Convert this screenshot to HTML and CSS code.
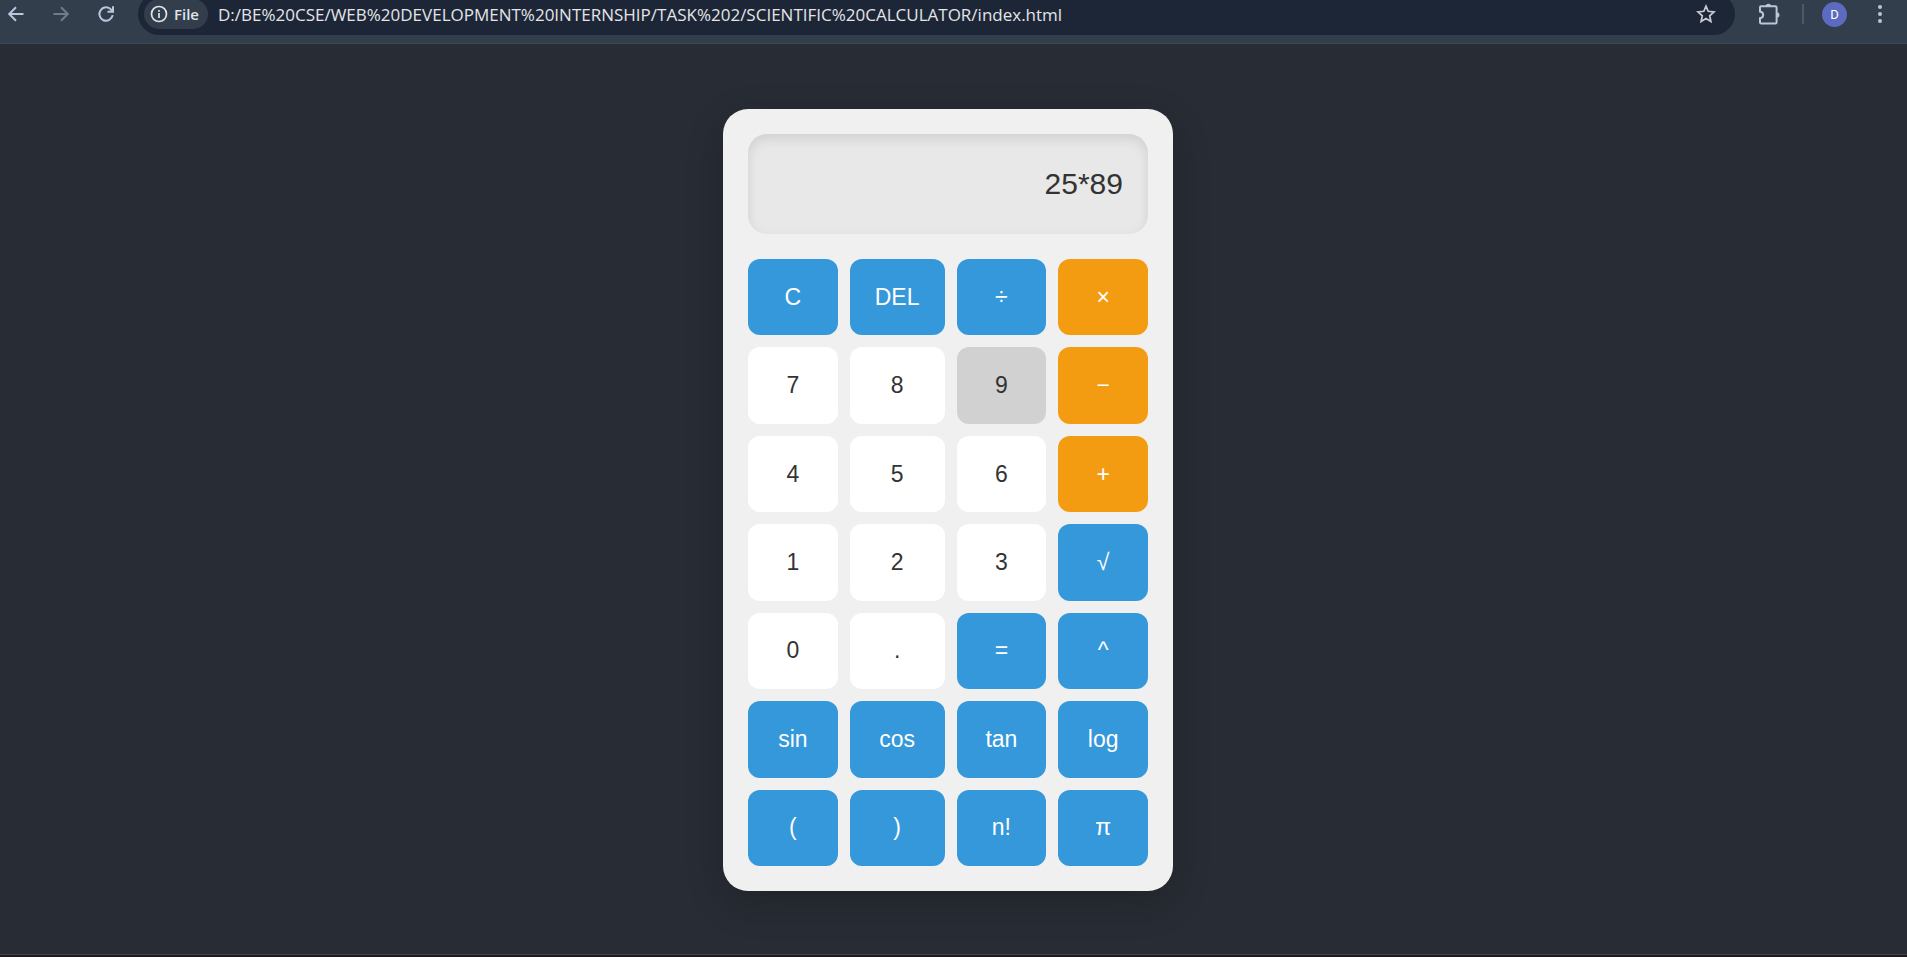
FILE: index.html
```html
<!DOCTYPE html>
<html lang="en">
<head>
<meta charset="utf-8">
<title>Scientific Calculator</title>
<link rel="stylesheet" href="styles.css">
</head>
<body>
<header class="toolbar">
  <nav class="nav">
    <button class="icon-button" type="button" aria-label="Back"><svg width="18" height="18" viewBox="0 0 18 18"><path d="M16.500 9H2.500M9 2.200L2.200 9L9 15.800"/></svg></button>
    <button class="icon-button muted" type="button" aria-label="Forward"><svg width="18" height="18" viewBox="0 0 18 18"><path d="M1.500 9H15.500M9 2.200L15.800 9L9 15.800"/></svg></button>
    <button class="icon-button" type="button" aria-label="Reload"><svg width="18" height="18" viewBox="0 0 18 18"><path d="M15.700 10.200A6.700 6.700 0 1 1 14.200 4.700L16 6.500M16 1.300V6.800H10.500"/></svg></button>
  </nav>
  <div class="address">
    <button class="chip" type="button"><svg width="18" height="18" viewBox="0 0 18 18"><circle cx="9" cy="9" r="7.500"/><path d="M9 8V13M9 5V6.800"/></svg>File</button>
    <input class="url" type="text" aria-label="Address" value="D:/BE%20CSE/WEB%20DEVELOPMENT%20INTERNSHIP/TASK%202/SCIENTIFIC%20CALCULATOR/index.html">
    <button class="icon-button star" type="button" aria-label="Bookmark"><svg width="20" height="20" viewBox="0 0 20 20"><path d="M10 2.200L12.200 7.300L18 7.900L13.700 11.800L14.900 17.500L10 14.600L5.100 17.500L6.300 11.800L2 7.900L7.800 7.300Z"/></svg></button>
  </div>
  <div class="actions">
    <button class="icon-button" type="button" aria-label="Extensions"><svg width="24" height="24" viewBox="0 0 24 24"><path d="M4 4.300H18.300Q19.600 4.300 19.600 5.600V20.200Q19.600 21.500 18.300 21.500H4.300Q3 21.500 3 20.200V16.200Q6.200 15.600 6.200 12.900Q6.200 10.200 3 9.600V5.300Q3 4.300 4 4.300Z"/><path class="solid" d="M8.500 4.500Q8.700 1.700 11.400 1.700Q14.100 1.700 14.300 4.500ZM19.500 10.200Q22.500 10.400 22.500 12.900Q22.500 15.400 19.500 15.600Z"/></svg></button>
    <span class="divider"></span>
    <button class="avatar" type="button" aria-label="Profile">D</button>
    <button class="icon-button" type="button" aria-label="Menu"><svg width="20" height="20" viewBox="0 0 20 20"><g class="solid"><circle cx="10" cy="3" r="2"/><circle cx="10" cy="10" r="2"/><circle cx="10" cy="17" r="2"/></g></svg></button>
  </div>
</header>
<main class="stage">
  <section class="calculator" aria-label="Calculator">
    <input class="display" type="text" aria-label="Expression" value="25*89" readonly>
    <div class="keypad">
      <button class="key function" type="button">C</button>
      <button class="key function" type="button">DEL</button>
      <button class="key function" type="button">÷</button>
      <button class="key operator" type="button">×</button>
      <button class="key" type="button">7</button>
      <button class="key" type="button">8</button>
      <button class="key pressed" type="button">9</button>
      <button class="key operator" type="button">−</button>
      <button class="key" type="button">4</button>
      <button class="key" type="button">5</button>
      <button class="key" type="button">6</button>
      <button class="key operator" type="button">+</button>
      <button class="key" type="button">1</button>
      <button class="key" type="button">2</button>
      <button class="key" type="button">3</button>
      <button class="key function" type="button">√</button>
      <button class="key" type="button">0</button>
      <button class="key" type="button">.</button>
      <button class="key function" type="button">=</button>
      <button class="key function" type="button">^</button>
      <button class="key function" type="button">sin</button>
      <button class="key function" type="button">cos</button>
      <button class="key function" type="button">tan</button>
      <button class="key function" type="button">log</button>
      <button class="key function" type="button">(</button>
      <button class="key function" type="button">)</button>
      <button class="key function" type="button">n!</button>
      <button class="key function" type="button">π</button>
    </div>
  </section>
</main>
<footer class="edge"></footer>
</body>
</html>
```

FILE: styles.css
```css
* {
  box-sizing: border-box;
}

body {
  display: flex;
  flex-direction: column;
  height: 100vh;
  margin: 0;
  overflow: hidden;
  background: #282c34;
  font-family: "Liberation Sans", Arial, sans-serif;
}

button,
input {
  margin: 0;
  padding: 0;
  border: 0;
  font-family: inherit;
}

/* Browser toolbar, its top edge runs under the window frame */
.toolbar {
  display: flex;
  flex: none;
  align-items: flex-start;
  gap: 17px;
  height: 51px;
  margin-top: -7px;
  padding: 0 12px 0 1px;
  background: #333e4d;
  border-bottom: 1px solid #414853;
  font-family: "Open Sans", "Noto Sans", sans-serif;
}

.nav,
.actions,
.address {
  display: flex;
  align-items: center;
  height: 42px;
}

.nav {
  gap: 15px;
}

.actions {
  gap: 18px;
  padding-left: 2px;
}

.icon-button {
  display: flex;
  flex: none;
  align-items: center;
  justify-content: center;
  width: 30px;
  height: 30px;
  background: none;
  color: #b9c6dc;
}

.icon-button.muted {
  color: #737b87;
}

.icon-button.star {
  color: #c9cbd0;
}

svg {
  fill: none;
  stroke: currentColor;
  stroke-width: 2;
}

.star svg,
.chip svg {
  stroke-width: 1.700;
}

.solid {
  fill: currentColor;
  stroke: none;
}

.address {
  flex: 1;
  gap: 10px;
  padding: 0 14px 0 6px;
  border-radius: 21px;
  background: #1d2636;
}

.chip {
  display: flex;
  flex: none;
  align-items: center;
  gap: 6px;
  height: 30px;
  padding: 0 9px 0 6px;
  border-radius: 15px;
  background: #333e4d;
  color: #dfe3ea;
  font-size: 15px;
  font-weight: 600;
}

.url {
  flex: 1;
  min-width: 0;
  height: 30px;
  background: none;
  color: #e3e5e8;
  font-size: 17px;
}

.divider {
  width: 2px;
  height: 20px;
  background: #4c586a;
}

.avatar {
  width: 25px;
  height: 25px;
  border-radius: 50%;
  background: #5c6bc0;
  color: #fff;
  font-family: Roboto, sans-serif;
  font-size: 13px;
}

/* Calculator */
.stage {
  display: flex;
  flex: 1;
  align-items: center;
  justify-content: center;
  padding: 2px 11px 0 0;
}

.calculator {
  display: flex;
  flex-direction: column;
  gap: 25px;
  width: 450px;
  padding: 25px;
  border-radius: 25px;
  background: #f0f0f0;
  box-shadow: 0 12px 38px rgba(0, 0, 0, 0.2);
}

.display {
  width: 100%;
  height: 100px;
  padding: 0 25px;
  border-radius: 19px;
  background: #e8e8e8;
  box-shadow: inset 0 5px 12px rgba(0, 0, 0, 0.1);
  color: #333;
  font-size: 30px;
  text-align: right;
}

.keypad {
  display: grid;
  grid-template-columns: repeat(4, 1fr);
  grid-auto-rows: 1fr;
  gap: 12px;
  min-height: 607px;
}

.key {
  padding: 0 25px;
  border-radius: 12px;
  background: #fff;
  color: #333;
  font-size: 23px;
}

.key.pressed {
  background: #d1d1d1;
}

.key.function {
  background: #3498db;
  color: #fff;
}

.key.operator {
  background: #f39c12;
  color: #fff;
}

.edge {
  flex: none;
  height: 3px;
  border-top: 1px solid #444445;
  background: #211a1c;
}
```
